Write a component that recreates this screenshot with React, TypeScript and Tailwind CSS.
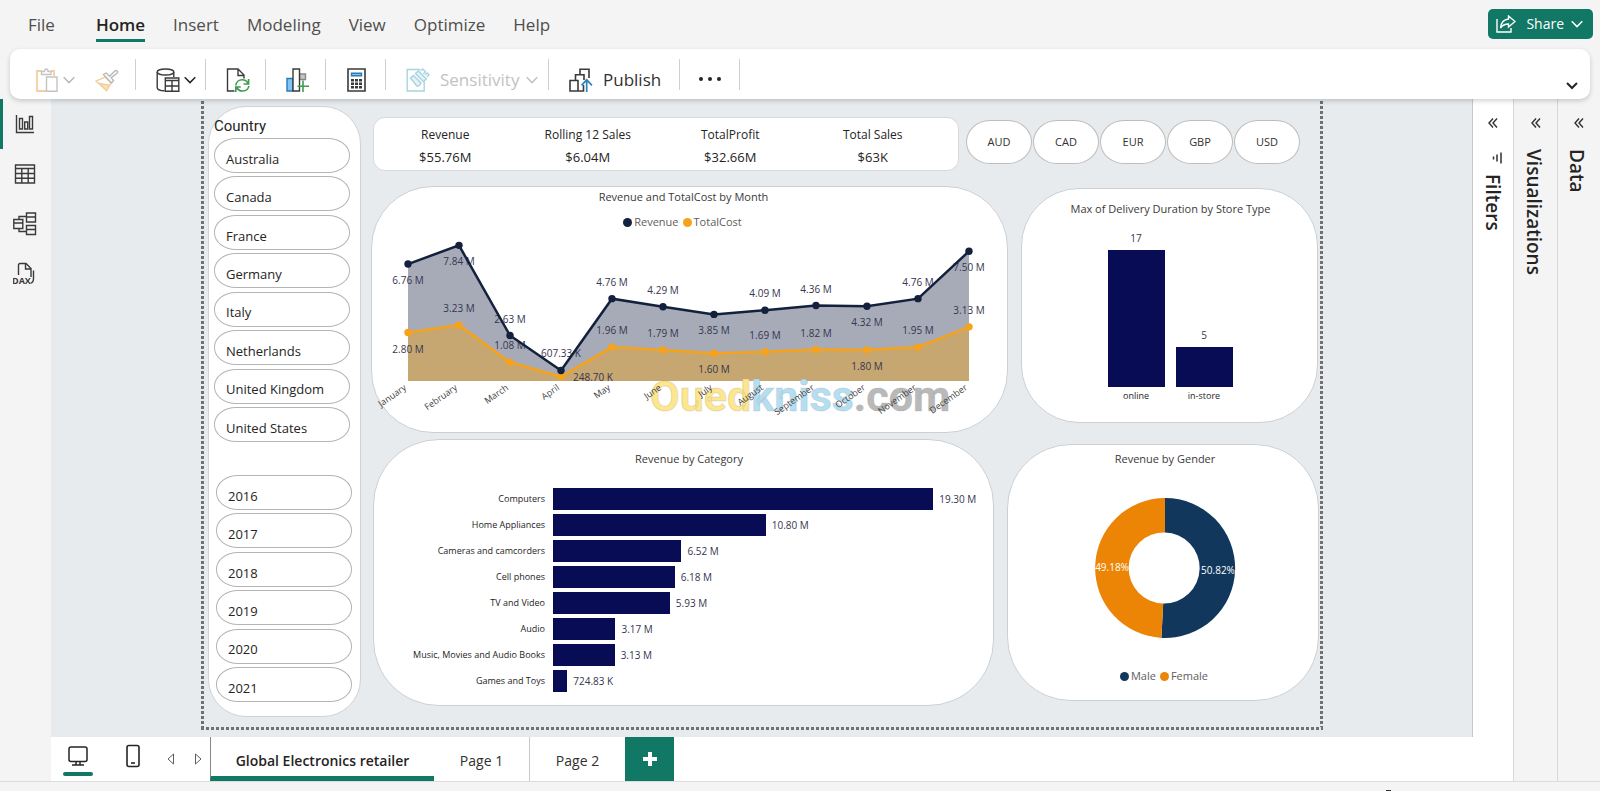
import type { ReactNode } from "react";

const countries = ["Australia", "Canada", "France", "Germany", "Italy", "Netherlands", "United Kingdom", "United States"];
const years = ["2016", "2017", "2018", "2019", "2020", "2021"];
const currencies = ["AUD", "CAD", "EUR", "GBP", "USD"];

const kpis = [
  { label: "Revenue", value: "$55.76M" },
  { label: "Rolling 12 Sales", value: "$6.04M" },
  { label: "TotalProfit", value: "$32.66M" },
  { label: "Total Sales", value: "$63K" },
];

type Place = "up" | "down" | "right";
const months: { name: string; rev: number; revText: string; revAt: Place; cost: number; costText: string; costAt: Place }[] = [
  { name: "January", rev: 6.76, revText: "6.76 M", revAt: "down", cost: 2.8, costText: "2.80 M", costAt: "down" },
  { name: "February", rev: 7.84, revText: "7.84 M", revAt: "down", cost: 3.23, costText: "3.23 M", costAt: "up" },
  { name: "March", rev: 2.63, revText: "2.63 M", revAt: "up", cost: 1.08, costText: "1.08 M", costAt: "up" },
  { name: "April", rev: 0.607, revText: "607.33 K", revAt: "up", cost: 0.249, costText: "248.70 K", costAt: "right" },
  { name: "May", rev: 4.76, revText: "4.76 M", revAt: "up", cost: 1.96, costText: "1.96 M", costAt: "up" },
  { name: "June", rev: 4.29, revText: "4.29 M", revAt: "up", cost: 1.79, costText: "1.79 M", costAt: "up" },
  { name: "July", rev: 3.85, revText: "3.85 M", revAt: "down", cost: 1.6, costText: "1.60 M", costAt: "down" },
  { name: "August", rev: 4.09, revText: "4.09 M", revAt: "up", cost: 1.69, costText: "1.69 M", costAt: "up" },
  { name: "September", rev: 4.36, revText: "4.36 M", revAt: "up", cost: 1.82, costText: "1.82 M", costAt: "up" },
  { name: "October", rev: 4.32, revText: "4.32 M", revAt: "down", cost: 1.8, costText: "1.80 M", costAt: "down" },
  { name: "November", rev: 4.76, revText: "4.76 M", revAt: "up", cost: 1.95, costText: "1.95 M", costAt: "up" },
  { name: "December", rev: 7.5, revText: "7.50 M", revAt: "down", cost: 3.13, costText: "3.13 M", costAt: "up" },
];

const categories = [
  { name: "Computers", value: 19.3, text: "19.30 M" },
  { name: "Home Appliances", value: 10.8, text: "10.80 M" },
  { name: "Cameras and camcorders", value: 6.52, text: "6.52 M" },
  { name: "Cell phones", value: 6.18, text: "6.18 M" },
  { name: "TV and Video", value: 5.93, text: "5.93 M" },
  { name: "Audio", value: 3.17, text: "3.17 M" },
  { name: "Music, Movies and Audio Books", value: 3.13, text: "3.13 M" },
  { name: "Games and Toys", value: 0.725, text: "724.83 K" },
];

const stores = [
  { name: "online", value: 17 },
  { name: "in-store", value: 5 },
];

function Chevron({ className }: { className: string }) {
  return (
    <svg viewBox="0 0 12 8" className={className} fill="none" stroke="currentColor" strokeWidth="1.5">
      <path d="M.7 1.2 6 6.6l5.3-5.4" />
    </svg>
  );
}

function Icon({ children, className = "h-6 w-6" }: { children: ReactNode; className?: string }) {
  return (
    <svg viewBox="0 0 24 24" className={`shrink-0 ${className}`} fill="none" stroke="#3b3a39" strokeWidth="1.4">
      {children}
    </svg>
  );
}

function PasteIcon() {
  return (
    <Icon>
      <path d="M7 3H2v20h9M16 3h3v5" stroke="#f3cf9f" strokeWidth="1.8" />
      <path d="M6.5 6.5V3.5h3C9.5 1.5 10.3 1 11.2 1s1.800.5 1.800 2.500h3v3z" stroke="#c4c4c4" fill="#fff" />
      <path d="M11.5 9H22v14.300H11.500z" stroke="#c4c4c4" fill="#fff" />
    </Icon>
  );
}

function BrushIcon() {
  return (
    <Icon>
      <path d="M1 13l10.500 9.500 4.500-7.500-6-6z" fill="#fff" stroke="#f3cf9f" />
      <path d="M4.500 15.500 14.500 17l-3 5.500z" fill="#fbe0b6" stroke="#f3cf9f" />
      <path d="M8.500 6.500 16.500 15l2-2.500-2.300-2.800 5.800-4.500c1.500-1.600-.6-3.600-2.200-2.200l-5.200 5.200-3.300-3.200z" stroke="#b9b9b9" fill="#fff" />
    </Icon>
  );
}

function DatabaseIcon() {
  return (
    <Icon>
      <ellipse cx="9.500" cy="4" rx="8.300" ry="3" />
      <path d="M1.200 4v15.500c0 2 3 3.200 7.300 3.300M17.800 4v5" />
      <path d="M9.300 10h13.500v13.300H9.300z" fill="#fff" />
      <path d="M9.300 12.500h13.500M9.300 18h13.500M16 13v10" />
    </Icon>
  );
}

function RefreshDocIcon() {
  return (
    <Icon>
      <path d="M8.500 23H1.500V1H12l6 6v3.500M12 1v6.500h6" />
      <path d="M9.800 17.500c.4-3.600 3.200-5.700 6.400-5.700 2.800 0 4.700 1.300 5.900 3.700M22.600 11v5h-5M22.800 18c-.4 3-2.800 5-6.200 5-2.900 0-4.800-1.300-6-3.500M9.800 24v-5h5" stroke="#3d9a50" strokeWidth="1.600" />
    </Icon>
  );
}

function VisualIcon() {
  return (
    <Icon>
      <path d="M1 10.500h6V23H1z" fill="#84c4f4" stroke="#2a7ab8" />
      <path d="M13.500 6h6v5.500h-6z" fill="#c8c6c4" stroke="#8a8886" />
      <path d="M13.500 23H7V1h6.500z" fill="#fff" />
      <path d="M17 12.500v11.500M11.500 18.300h11.500" stroke="#3d9a50" strokeWidth="1.600" />
    </Icon>
  );
}

function CalculatorIcon() {
  return (
    <Icon>
      <path d="M2 1h17v22H2z" strokeWidth="1.600" />
      <path d="M5.500 5.300h10v2.400h-10z" fill="#84c4f4" stroke="#2a7ab8" />
      <path d="M5 12.200h11M5 15.700h11M5 19.200h11" strokeWidth="2.400" strokeDasharray="3 1" />
    </Icon>
  );
}

function SensitivityIcon() {
  return (
    <Icon>
      <path d="M14 1.500H1.200V23h17V14" stroke="#a9d3df" />
      <path d="m4.500 10 3-2.600 7.500 7.500-1.500 2.600-2.500.6z" stroke="#a9d3df" fill="#e3f2f6" />
      <path d="m9.500 5.500 2.800-2.500 8 8-2.800 2.800z" stroke="#a9d3df" fill="#e3f2f6" />
      <path d="m14.500 3 2.300-2 2.700 2.700-2.200 2.200M19 7l2.300-2 1.700 1.700-2.300 2.300" stroke="#a9d3df" />
    </Icon>
  );
}

function PublishIcon() {
  return (
    <Icon>
      <path d="M11 6.500V1.200h9V10M1 12.500h8V23H1zM6.500 12.500V6.800h8.500V12M9 23h5.500V17" strokeWidth="1.600" />
      <path d="M17.700 24V12M12.500 17.300l5.200-5.500 5.200 5.500" stroke="#2f83b8" strokeWidth="1.700" />
    </Icon>
  );
}

function ReportIcon() {
  return (
    <Icon>
      <path d="M3.500 3v17.500H21M6.500 6.500h3V17h-3zM11.700 10h3v7h-3zM16.500 4.500h3V17h-3z" />
    </Icon>
  );
}

function TableIcon() {
  return (
    <Icon>
      <path d="M2.500 3h19v18h-19zM2.500 6.500h19M2.500 11.500h19M2.500 16.200h19M8.800 6.500V21M15.200 6.500V21" />
    </Icon>
  );
}

function ModelIcon() {
  return (
    <Icon>
      <path d="M13.500 1h9v9h-9zM13.500 5h9M13.500 13.500h9v9h-9zM13.500 17.500h9M.8 7.500h9v9h-9zM.8 11h9M6 7.500V4.500h7.500M6 16.500v3h7.500" />
    </Icon>
  );
}

function DaxIcon() {
  return (
    <Icon>
      <path d="M5.500 13V3c0-1 .5-1.500 1.500-1.500h6l5 5V15M12.500 1.500V7H18M20.500 8.500v8c0 2.500-1 4.500-3.500 5" />
      <text x="-1" y="21.500" className="font-['Open_Sans'] text-[9px] font-bold" fill="#3b3a39" stroke="#f4f4f4" strokeWidth="1" paintOrder="stroke">DAX</text>
    </Icon>
  );
}

const menu = ["Insert", "Modeling", "View", "Optimize", "Help"];

function MenuBar() {
  const tab = "border-b-[3px] border-transparent";
  return (
    <header className="flex h-[49px] items-start justify-between pl-7 pr-[7px]">
      <nav className="flex gap-7 pt-[11px] text-[17px] leading-7 text-[#4f4e4d]">
        <button className={`mr-[13px] ${tab}`}>File</button>
        <button className="border-b-[3px] border-[#117865] font-semibold text-[#252423]">Home</button>
        {menu.map((m) => (
          <button key={m} className={tab}>{m}</button>
        ))}
      </nav>
      <button className="mt-[9px] flex h-[30px] items-center rounded-[5px] bg-[#117865] pl-2 pr-[10px] text-sm text-white">
        <svg viewBox="0 0 20 18" className="mr-[10px] h-[18px] w-5" fill="none" stroke="currentColor" strokeWidth="1.400">
          <path d="M1 4v13h14v-4" />
          <path d="M12.500 1 19 6.500l-6.500 5.500V9C9 9 6.500 10 4.500 13c.5-5 3-8.500 8-9z" />
        </svg>
        Share
        <Chevron className="ml-[7px] h-2 w-3" />
      </button>
    </header>
  );
}

const group = "flex h-[31px] shrink-0 items-start border-r border-[#cfcfcf] pt-[9px]";

function Ribbon() {
  return (
    <div className="relative z-10 mx-[10px] flex h-[50px] items-start rounded-[10px] bg-white pt-[10px] text-[17px] leading-6 shadow-[0_2px_5px_rgba(0,0,0,0.18)]">
      <div className={`${group} w-[126px] pl-[25px]`}>
        <button aria-label="Paste" className="flex items-center gap-1 text-[#b9b9b9]"><PasteIcon /><Chevron className="h-2 w-3" /></button>
        <button aria-label="Format painter" className="ml-5"><BrushIcon /></button>
      </div>
      <div className={`${group} w-[70px] pl-5`}>
        <button aria-label="Get data" className="flex items-center gap-1 text-[#252423]"><DatabaseIcon /><Chevron className="h-2 w-3" /></button>
      </div>
      <div className={`${group} w-[60px] pl-5`}><button aria-label="Refresh"><RefreshDocIcon /></button></div>
      <div className={`${group} w-[60px] pl-5`}><button aria-label="New visual"><VisualIcon /></button></div>
      <div className={`${group} w-[60px] pl-5`}><button aria-label="New measure"><CalculatorIcon /></button></div>
      <div className={`${group} w-[163px] pl-5`}>
        <button className="flex items-center text-[#c2c2c2]"><SensitivityIcon /><span className="ml-[10px] mr-[7px]">Sensitivity</span><Chevron className="h-2 w-3" /></button>
      </div>
      <div className={`${group} w-[131px] pl-5`}>
        <button className="flex items-center gap-[10px] text-[#323130]"><PublishIcon />Publish</button>
      </div>
      <div className={`${group} w-[60px] justify-center`}>
        <button aria-label="More options">
          <svg viewBox="0 0 24 24" className="h-6 w-6" fill="#252423"><circle cx="3" cy="11" r="2" /><circle cx="12" cy="11" r="2" /><circle cx="21" cy="11" r="2" /></svg>
        </button>
      </div>
      <button aria-label="Collapse ribbon" className="ml-auto mr-3 mt-[23px] text-[#252423]">
        <svg viewBox="0 0 12 8" className="h-2 w-3" fill="none" stroke="currentColor" strokeWidth="2"><path d="M1 1l5 5 5-5" /></svg>
      </button>
    </div>
  );
}

function Rail() {
  const item = "flex h-[50px] w-full items-center border-l-[3px] pl-[10px]";
  return (
    <aside className="w-[51px] shrink-0">
      <button aria-label="Report view" className={`${item} border-[#117865]`}><ReportIcon /></button>
      <button aria-label="Table view" className={`${item} border-transparent`}><TableIcon /></button>
      <button aria-label="Model view" className={`${item} border-transparent`}><ModelIcon /></button>
      <button aria-label="DAX query view" className={`${item} border-transparent`}><DaxIcon /></button>
    </aside>
  );
}

function Pill({ text }: { text: string }) {
  return (
    <button className="flex h-[35px] w-[136px] items-center rounded-[22px/17px] border border-[#b5b5b5] pl-[11px] pt-2 text-[13px] text-[#252423]">{text}</button>
  );
}

function Slicers() {
  return (
    <section className="ml-1 mt-[7px] h-[611px] w-[153px] shrink-0 rounded-[38px] border border-[#d0d3d6] bg-white pl-[5px] pt-[10px]">
      <h2 className="h-[21px] font-['Roboto'] text-[15px] leading-[18px] text-[#252423]">Country</h2>
      <div className="flex h-[304px] flex-col justify-between">{countries.map((c) => <Pill key={c} text={c} />)}</div>
      <div className="ml-[2px] mt-[33px] flex h-[227px] flex-col justify-between">{years.map((y) => <Pill key={y} text={y} />)}</div>
    </section>
  );
}

const card = "border border-[#cdd0d3] bg-white";
const chartTitle = "text-center text-[11px] leading-4 text-[#3b3a39]";

const STEP = 51;
const BASE = 147;
const px = (i: number) => 36 + i * STEP;
const py = (v: number) => BASE - v * 17.3;

function labelPos(i: number, v: number, at: Place) {
  if (at === "right") return { x: px(i) + 32, y: py(v) + 4 };
  return { x: px(i), y: py(v) + (at === "up" ? -13 : 20) };
}

function MonthChart() {
  const rev = months.map((m, i) => `${px(i)},${py(m.rev)}`).join(" ");
  const cost = months.map((m, i) => `${px(i)},${py(m.cost)}`).join(" ");
  const floor = `${px(11)},${BASE} ${px(0)},${BASE}`;
  return (
    <svg viewBox="0 0 634 196" className="h-[196px] w-[634px] overflow-visible font-['Open_Sans'] text-[10px]">
      <polygon points={`${rev} ${floor}`} fill="#a6abb7" />
      <polygon points={`${cost} ${floor}`} fill="#c6a772" />
      <text x="278" y="177" className="font-['Roboto'] text-[43px] font-bold" stroke="#9a9a9a" strokeOpacity="0.25" strokeWidth="1">
        <tspan fill="#fde68c">Oued</tspan><tspan fill="#b4dff3">kniss</tspan><tspan fill="#b9b9b9">.com</tspan>
      </text>
      {months.map((m, i) => (
        <g key={m.name} textAnchor="middle" fill="#35364f">
          <text {...labelPos(i, m.rev, m.revAt)}>{m.revText}</text>
          <text {...labelPos(i, m.cost, m.costAt)}>{m.costText}</text>
          <text transform={`translate(${px(i) - 1} ${BASE + 8}) rotate(-35)`} textAnchor="end" className="text-[9px]" fill="#3f3f3f">{m.name}</text>
        </g>
      ))}
      <polyline points={cost} fill="none" stroke="#f7a21b" strokeWidth="2.500" />
      <polyline points={rev} fill="none" stroke="#14213d" strokeWidth="2.500" />
      {months.map((m, i) => (
        <g key={m.name}>
          <circle cx={px(i)} cy={py(m.cost)} r="3.700" fill="#f7a21b" />
          <circle cx={px(i)} cy={py(m.rev)} r="3.700" fill="#14213d" />
        </g>
      ))}
    </svg>
  );
}

function RevenueCard() {
  return (
    <section className={`${card} h-[247px] min-w-0 flex-1 rounded-[62px] pt-[2px]`}>
      <h3 className={`${chartTitle} pr-3`}>Revenue and TotalCost by Month</h3>
      <div className="mt-[9px] flex justify-center gap-1 pr-[14px] text-[11px] leading-4 text-[#605e5c]">
        <span className="flex items-center gap-[2px]"><i className="h-[9px] w-[9px] rounded-full bg-[#14213d]" />Revenue</span>
        <span className="flex items-center gap-[2px]"><i className="h-[9px] w-[9px] rounded-full bg-[#f7a21b]" />TotalCost</span>
      </div>
      <div className="mt-1"><MonthChart /></div>
    </section>
  );
}

function StoreCard() {
  return (
    <section className={`${card} mt-[2px] h-[235px] w-[297px] rounded-[58px] pt-3`}>
      <h3 className={`${chartTitle} pl-[2px]`}>Max of Delivery Duration by Store Type</h3>
      <div className="mt-[15px] flex h-[170px] items-end justify-center gap-[11px] pl-px">
        {stores.map((s) => (
          <div key={s.name} className="flex w-[57px] flex-col items-center">
            <span className="mb-1 text-[10px] leading-4 text-[#35364f]">{s.value}</span>
            <div className="w-full bg-[#080c54]" style={{ height: s.value * 8.06 }} />
            <span className="pt-[3px] text-[9px] leading-3 text-[#252423]">{s.name}</span>
          </div>
        ))}
      </div>
    </section>
  );
}

function CategoryCard() {
  return (
    <section className={`${card} h-[267px] min-w-0 flex-1 rounded-[66px] pt-[11px]`}>
      <h3 className={`${chartTitle} pl-[11px]`}>Revenue by Category</h3>
      <div className="mt-[21px] flex flex-col gap-1">
        {categories.map((c) => (
          <div key={c.name} className="flex h-[22px] items-center">
            <span className="w-[171px] shrink-0 text-right text-[9px] text-[#252423]">{c.name}</span>
            <div className="ml-2 h-full shrink-0 bg-[#080c54]" style={{ width: c.value * 19.7 }} />
            <span className="ml-[6px] whitespace-nowrap text-[10px] text-[#35364f]">{c.text}</span>
          </div>
        ))}
      </div>
    </section>
  );
}

function GenderCard() {
  return (
    <section className={`${card} mt-[5px] h-[257px] w-[312px] rounded-[64px] pl-1 pt-[6px]`}>
      <h3 className={chartTitle}>Revenue by Gender</h3>
      <svg viewBox="-75 -75 150 150" className="mx-auto mt-[26px] h-[150px] w-[150px] font-['Open_Sans'] text-[10px]">
        <path d="M0-70A70 70 0 1 1-3.600 69.900L-1.800 35.500A35.500 35.500 0 1 0 0-35.500z" fill="#12375c" />
        <path d="M-3.600 69.900A70 70 0 0 1 0-70V-35.500A35.500 35.500 0 0 0-1.800 35.500z" fill="#ec8506" />
        <text x="-53" y="3" textAnchor="middle" fill="#fff">49.18%</text>
        <text x="53" y="6" textAnchor="middle" fill="#fff">50.82%</text>
      </svg>
      <div className="mt-[25px] flex justify-center gap-1 pr-[2px] text-[11px] leading-4 text-[#605e5c]">
        <span className="flex items-center gap-[2px]"><i className="h-[9px] w-[9px] rounded-full bg-[#12375c]" />Male</span>
        <span className="flex items-center gap-[2px]"><i className="h-[9px] w-[9px] rounded-full bg-[#ec8506]" />Female</span>
      </div>
    </section>
  );
}

function Dashboard() {
  return (
    <div className="ml-[10px] flex min-w-0 flex-1 flex-col">
      <div className="mt-[18px] flex gap-[7px] pl-[2px] pr-5">
        <dl className="grid h-[54px] flex-1 grid-cols-4 rounded-xl border border-[#d6d9dc] bg-white pr-[14px] pt-[7px] text-center text-[#252423]">
          {kpis.map((k) => (
            <div key={k.label}>
              <dt className="text-xs leading-5">{k.label}</dt>
              <dd className="text-[13px] leading-6">{k.value}</dd>
            </div>
          ))}
        </dl>
        <div className="mt-[3px] flex gap-px">
          {currencies.map((c) => (
            <button key={c} className="h-11 w-[66px] rounded-[24px/22px] border border-[#bdbdbd] bg-white text-[11px] text-[#323130]">{c}</button>
          ))}
        </div>
      </div>
      <div className="mt-[15px] flex items-start gap-[13px] pr-[2px]">
        <RevenueCard />
        <StoreCard />
      </div>
      <div className="mt-[6px] flex items-start gap-[13px] pl-[2px] pr-px">
        <CategoryCard />
        <GenderCard />
      </div>
    </div>
  );
}

const dotsV = "w-[3px] shrink-0 bg-[repeating-linear-gradient(to_bottom,transparent_0_2px,#707070_2px_5px)]";

function Canvas() {
  return (
    <div className="flex flex-1 border-r border-[#c8c8c8] bg-[#e7ebee] pb-[7px] pl-[150px] pr-[149px]">
      <div className="flex min-w-0 flex-1 flex-col">
        <div className="flex flex-1">
          <div className={dotsV} />
          <Slicers />
          <Dashboard />
          <div className={dotsV} />
        </div>
        <div className="h-[3px] bg-[repeating-linear-gradient(to_right,#707070_0_3px,transparent_3px_5px)]" />
      </div>
    </div>
  );
}

function PageTabs() {
  return (
    <footer className="flex h-11 bg-white text-sm text-[#323130]">
      <button aria-label="Desktop layout" className="ml-3 flex w-[30px] flex-col items-center pt-[7px]">
        <svg viewBox="0 0 24 24" className="h-6 w-6" fill="none" stroke="#252423" strokeWidth="1.500">
          <rect x="3" y="3" width="18" height="14.500" rx="2" />
          <path d="M10 17.500v3.500M14 17.500v3.500M6 21h12" />
        </svg>
        <i className="mt-1 h-1 w-full rounded-full bg-[#117865]" />
      </button>
      <button aria-label="Mobile layout" className="ml-7 flex w-6 items-start pt-[7px]">
        <svg viewBox="0 0 24 24" className="h-6 w-6" fill="none" stroke="#252423" strokeWidth="1.600">
          <rect x="6" y="1.500" width="12" height="21" rx="2" />
          <path d="M10 19h4" />
        </svg>
      </button>
      <button aria-label="Previous page" className="ml-[22px]">
        <svg viewBox="0 0 8 12" className="h-3 w-2" fill="none" stroke="#605e5c"><path d="M6.500 1v10L1 6z" /></svg>
      </button>
      <button aria-label="Next page" className="ml-[19px] mr-2">
        <svg viewBox="0 0 8 12" className="h-3 w-2" fill="none" stroke="#605e5c"><path d="M1.500 1v10L7 6z" /></svg>
      </button>
      <button className="w-[224px] border-b-[5px] border-l border-b-[#117865] border-l-[#8a8886] pt-2 font-semibold text-[#252423]">Global Electronics retailer</button>
      <button className="w-24 border-r border-[#c8c8c8] pt-1">Page 1</button>
      <button className="w-[95px] pt-1">Page 2</button>
      <button aria-label="New page" className="flex w-[49px] items-center justify-center bg-[#117865]">
        <svg viewBox="0 0 14 14" className="h-[14px] w-[14px]" stroke="#fff" strokeWidth="4"><path d="M7 0v14M0 7h14" /></svg>
      </button>
    </footer>
  );
}

function Pane({ title, className, filter }: { title: string; className: string; filter?: boolean }) {
  return (
    <aside className={`flex shrink-0 flex-col items-center pt-[18px] ${className}`}>
      <button aria-label={`Expand ${title}`}>
        <svg viewBox="0 0 10 12" className="h-3 w-[10px]" fill="none" stroke="#323130" strokeWidth="1.400"><path d="M5 1.500 1 6l4 4.500M9 1.500 5 6l4 4.500" /></svg>
      </button>
      {filter && (
        <svg viewBox="0 0 12 12" className="ml-[5px] mt-[23px] h-3 w-3" fill="none" stroke="#323130" strokeWidth="1.500"><path d="M11 .5v11M7 2.500v7M3.500 4.500v3" /></svg>
      )}
      <h2 className={`text-[19px] font-semibold leading-6 text-[#252423] [writing-mode:vertical-rl] ${filter ? "mt-[10px]" : "mr-1 mt-5"}`}>{title}</h2>
    </aside>
  );
}

export default function App() {
  return (
    <div className="flex min-h-screen flex-col bg-[#f4f4f4] font-['Open_Sans',sans-serif]">
      <MenuBar />
      <Ribbon />
      <div className="flex flex-1">
        <Rail />
        <div className="flex min-w-0 flex-1 flex-col">
          <Canvas />
          <PageTabs />
        </div>
        <Pane title="Filters" className="w-10 bg-white" filter />
        <Pane title="Visualizations" className="w-11 border-l border-[#d8d8d8]" />
        <Pane title="Data" className="w-[43px] border-l border-[#d8d8d8]" />
      </div>
      <div className="flex h-[10px] items-end justify-end border-t border-[#dcdcdc] pr-[209px]">
        <i className="h-px w-[5px] bg-[#323130]" />
      </div>
    </div>
  );
}
